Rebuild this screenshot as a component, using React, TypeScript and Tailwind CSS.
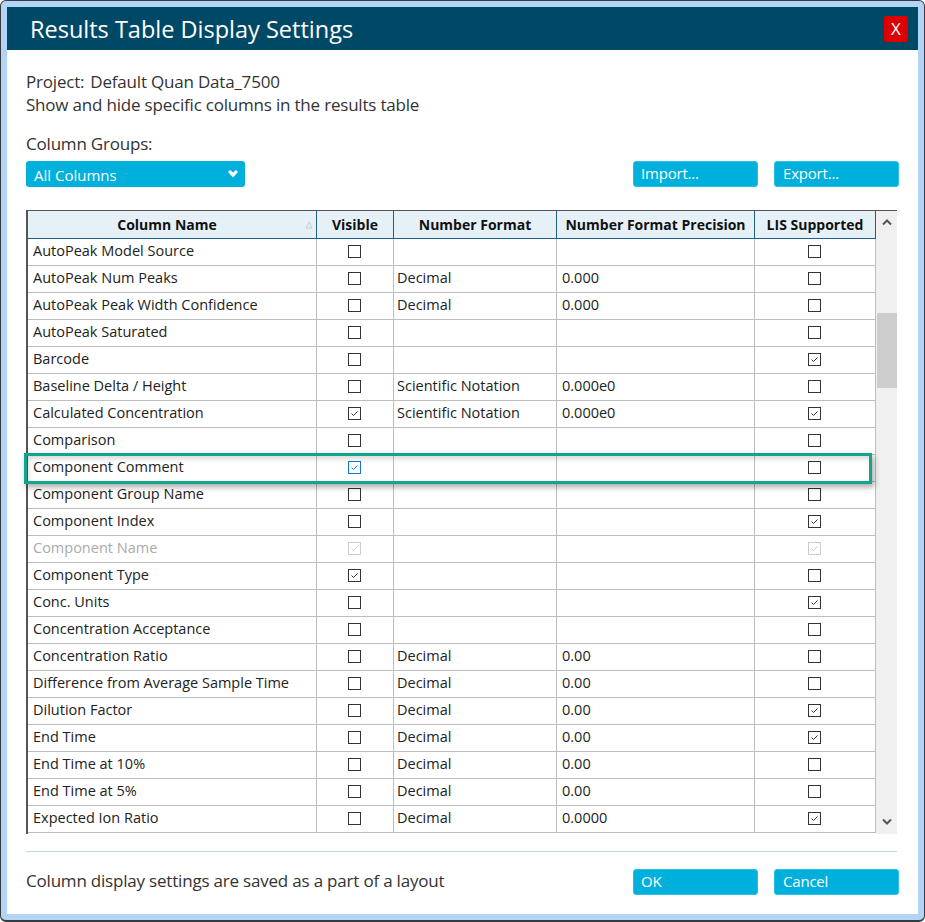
import React from "react";

const F = { d: "Decimal", s: "Scientific Notation" };
type Row = [string, number, string, string, number];
// name, visible(0 none,1 check,2 blue,3 disabled), format, precision, lis
const rows: Row[] = [
  ["AutoPeak Model Source", 0, "", "", 0],
  ["AutoPeak Num Peaks", 0, F.d, "0.000", 0],
  ["AutoPeak Peak Width Confidence", 0, F.d, "0.000", 0],
  ["AutoPeak Saturated", 0, "", "", 0],
  ["Barcode", 0, "", "", 1],
  ["Baseline Delta / Height", 0, F.s, "0.000e0", 0],
  ["Calculated Concentration", 1, F.s, "0.000e0", 1],
  ["Comparison", 0, "", "", 0],
  ["Component Comment", 2, "", "", 0],
  ["Component Group Name", 0, "", "", 0],
  ["Component Index", 0, "", "", 1],
  ["Component Name", 3, "", "", 3],
  ["Component Type", 1, "", "", 0],
  ["Conc. Units", 0, "", "", 1],
  ["Concentration Acceptance", 0, "", "", 0],
  ["Concentration Ratio", 0, F.d, "0.00", 0],
  ["Difference from Average Sample Time", 0, F.d, "0.00", 0],
  ["Dilution Factor", 0, F.d, "0.00", 1],
  ["End Time", 0, F.d, "0.00", 1],
  ["End Time at 10%", 0, F.d, "0.00", 0],
  ["End Time at 5%", 0, F.d, "0.00", 0],
  ["Expected Ion Ratio", 0, F.d, "0.0000", 1],
];

function Check({ state }: { state: number }) {
  const border =
    state === 2 ? "border-[#0f78d4]" : state === 3 ? "border-[#cccccc]" : "border-[#333333]";
  const stroke = state === 2 ? "#0f78d4" : state === 3 ? "#cccccc" : "#333333";
  return (
    <div className={`w-[13px] h-[13px] border ${border} bg-white shrink-0`}>
      {state > 0 && (
        <svg width="11" height="11" viewBox="0 0 11 11" className="block">
          <path d="M2.5 5.5 L4.5 7.5 L8.5 3.5" fill="none" stroke={stroke} strokeWidth="1" />
        </svg>
      )}
    </div>
  );
}

function Btn({ label, pad }: { label: string; pad: string }) {
  return (
    <div
      className={`w-[125px] h-[26px] rounded-[3px] bg-[#00b0dc] border border-[#2cc0e6] text-white text-[15px] leading-[22px] tracking-[-0.2px] ${pad}`}
    >
      {label}
    </div>
  );
}

export default function App() {
  return (
    <div
      className="relative w-[925px] h-[922px] bg-white text-[#333333] overflow-hidden"
      style={{ fontFamily: '"Open Sans", "Noto Sans", sans-serif' }}
    >
      <div className="w-[925px] h-[922px] border border-[#3a3a3a] border-b-2 rounded-t-[6px] rounded-b-[6px] bg-[#b2d4f6] px-[6px] pt-[6px] pb-[6px]">
        <div className="h-full bg-white flex flex-col">
          <div className="h-[43px] bg-[#004966] flex items-center justify-between pl-[23px] pr-[10px] shrink-0">
            <span className="text-white text-[23.5px] leading-[32px]">Results Table Display Settings</span>
            <div className="w-[24px] h-[26px] rounded-[2px] bg-[#de0000] text-white text-[17px] flex items-center justify-center">
              X
            </div>
          </div>

          <div className="flex flex-col flex-1 pl-[19px] pr-[20px]">
            <div className="pt-[20px] text-[17px] leading-[23px] tracking-[-0.2px]">
              <div>
                Project:<span className="ml-[6px]">Default Quan Data_7500</span>
              </div>
              <div>Show and hide specific columns in the results table</div>
            </div>
            <div className="mt-[16px] text-[17px] leading-[23px] tracking-[-0.2px]">Column Groups:</div>
            <div className="mt-[6px] flex items-center justify-between">
              <div className="w-[219px] h-[26px] rounded-[3px] bg-[#00b0dc] text-white text-[15px] flex items-center justify-between pl-[8px] pr-[6px]">
                <span className="leading-[26px] pt-[2px]">All Columns</span>
                <svg width="12" height="10" viewBox="0 0 12 10">
                  <path d="M1 3 L3 1 L6 3.5 L9 1 L11 3 L6 8.5 Z" fill="white" />
                </svg>
              </div>
              <div className="flex gap-[16px] mr-[-1px]">
                <Btn label="Import..." pad="pl-[7px]" />
                <Btn label="Export..." pad="pl-[8px]" />
              </div>
            </div>

            <div className="mt-[23px] flex w-[871px] h-[624px] shrink-0 overflow-hidden">
              <div className="w-[850px] flex flex-col border-l-2 border-[#555555] shrink-0">
                <div className="flex h-[29px] shrink-0 bg-[#e6f0f7] border-t border-t-[#555555] border-b border-b-[#1f5f85] text-[14px] font-bold text-[#111111]">
                  <div className="relative w-[289px] border-r border-[#1f5f85] flex items-center justify-center pr-[10px] shrink-0">
                    Column Name
                    <svg width="8" height="8" viewBox="0 0 8 8" className="absolute right-[3px] top-[10px]">
                      <path d="M1 7 H7 L4.5 1 Z" fill="none" stroke="#c4c4c4" strokeWidth="0.8" />
                    </svg>
                  </div>
                  <div className="w-[77px] border-r border-[#1f5f85] flex items-center justify-center shrink-0">Visible</div>
                  <div className="w-[163px] border-r border-[#1f5f85] flex items-center justify-center shrink-0">Number Format</div>
                  <div className="w-[198px] border-r border-[#1f5f85] flex items-center justify-center shrink-0">Number Format Precision</div>
                  <div className="w-[121px] border-r border-[#1f5f85] flex items-center justify-center shrink-0">LIS Supported</div>
                </div>
                {rows.map((r) => (
                  <div
                    key={r[0]}
                    className={`flex h-[27px] shrink-0 border-b border-[#bdbdbd] text-[14.5px] leading-[24px] ${r[1] === 3 ? "text-[#aaaaaa]" : "text-[#222222]"}`}
                  >
                    <div className="w-[289px] border-r border-[#bdbdbd] pl-[5px] shrink-0 truncate">{r[0]}</div>
                    <div className="w-[77px] border-r border-[#bdbdbd] flex items-center justify-center pr-[1px] pb-[2px] shrink-0">
                      <Check state={r[1]} />
                    </div>
                    <div className="w-[163px] border-r border-[#bdbdbd] pl-[3px] shrink-0 truncate">{r[2]}</div>
                    <div className="w-[198px] border-r border-[#bdbdbd] pl-[5px] shrink-0 truncate">{r[3]}</div>
                    <div className="w-[121px] border-r border-[#bdbdbd] flex items-center justify-center pr-[1px] pb-[2px] shrink-0">
                      <Check state={r[4]} />
                    </div>
                  </div>
                ))}
              </div>
              <div className="w-[21px] bg-[#f0f0f0] border-t border-[#555555] flex flex-col items-center shrink-0">
                <svg width="12" height="8" viewBox="0 0 12 8" className="mt-[7px] shrink-0">
                  <path d="M2 6.5 L6 2.5 L10 6.5" fill="none" stroke="#555555" strokeWidth="2" />
                </svg>
                <div className="mt-[87px] w-[20px] h-[75px] bg-[#cdcdcd] shrink-0" />
                <div className="flex-1" />
                <svg width="12" height="8" viewBox="0 0 12 8" className="mb-[8px] shrink-0">
                  <path d="M2 1.5 L6 5.5 L10 1.5" fill="none" stroke="#555555" strokeWidth="2" />
                </svg>
              </div>
            </div>

            <div className="mt-[17px] w-[871px] h-px bg-[#bcdcec] shrink-0" />
            <div className="mt-[17px] h-[26px] flex items-center justify-between">
              <span className="text-[17px] leading-[26px] tracking-[-0.2px] pb-[2px]">Column display settings are saved as a part of a layout</span>
              <div className="flex gap-[16px] mr-[-1px]">
                <Btn label="OK" pad="pl-[7px]" />
                <Btn label="Cancel" pad="pl-[8px]" />
              </div>
            </div>
          </div>
        </div>
      </div>

      <div className="absolute left-[24px] top-[453px] w-[848px] h-[31px] border-[3px] border-[#12a58c] shadow-[2px_3px_6px_rgba(0,0,0,0.35),inset_2px_3px_5px_rgba(0,0,0,0.15)]" />
    </div>
  );
}
